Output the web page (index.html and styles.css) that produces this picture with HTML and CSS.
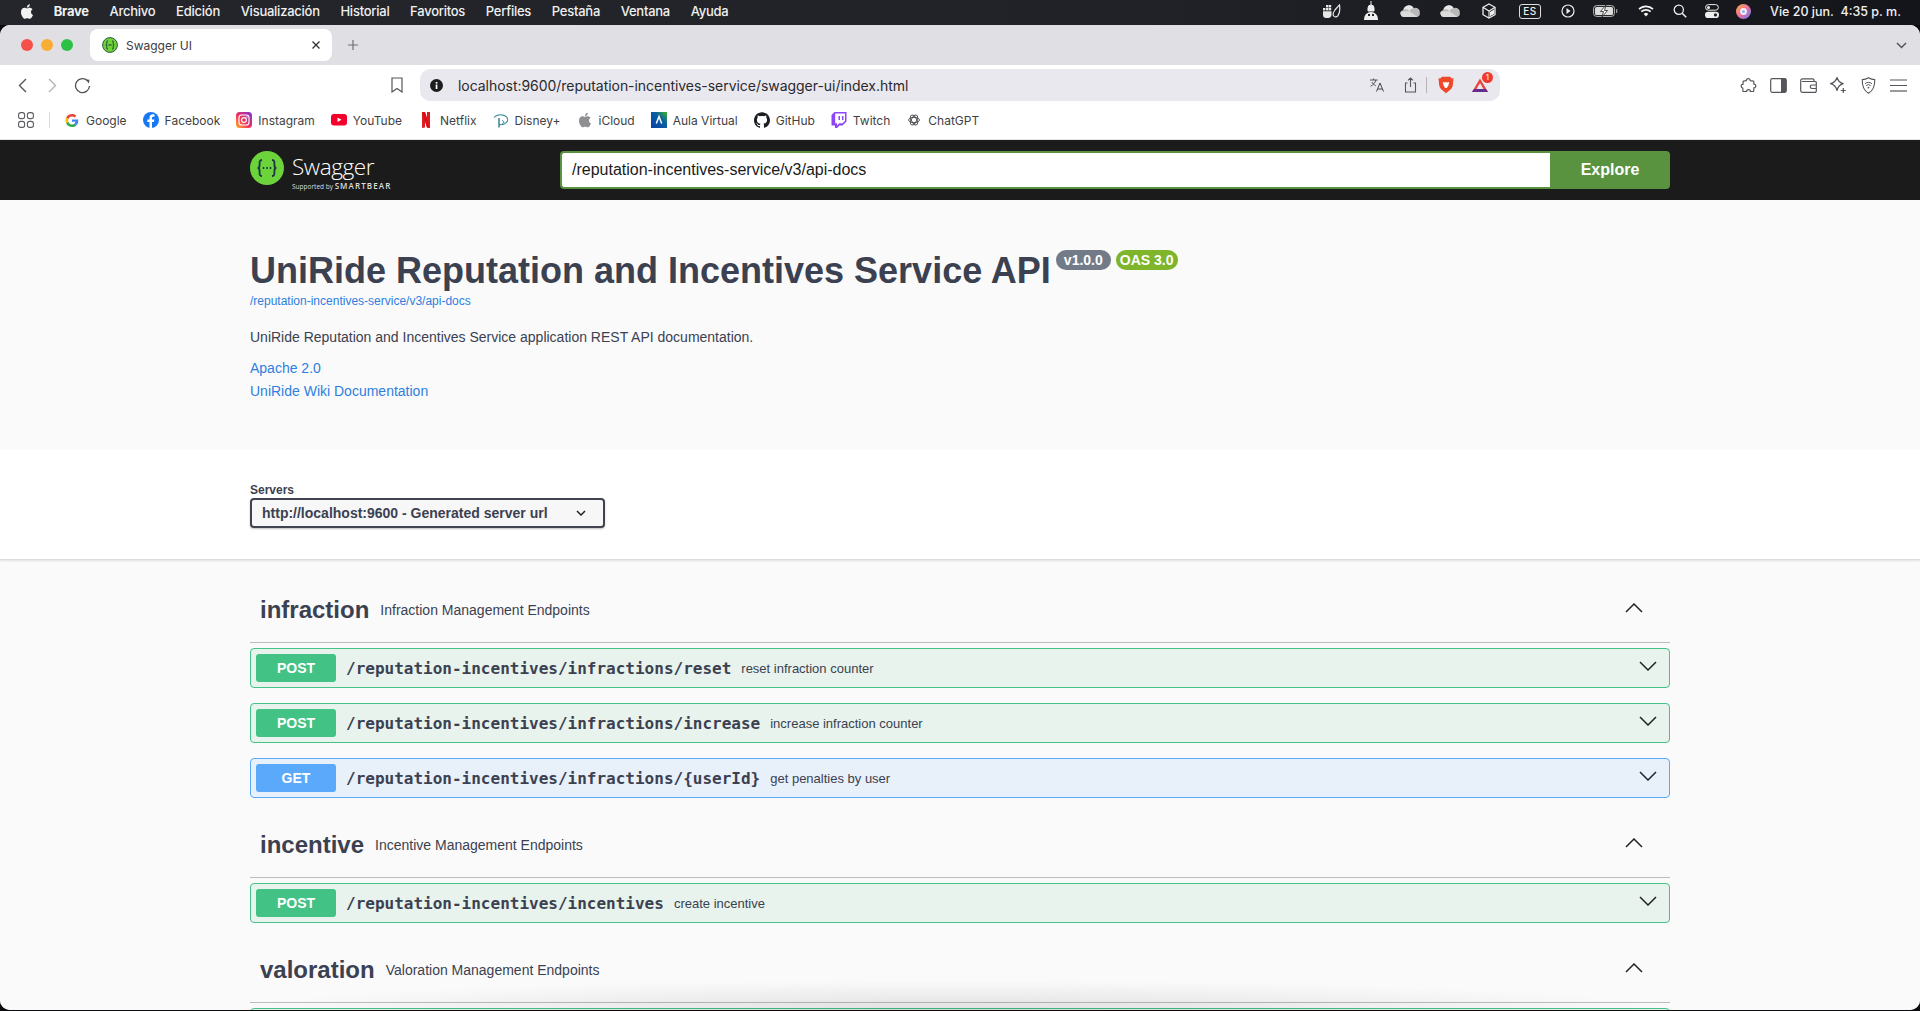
FILE: index.html
```html
<!DOCTYPE html>
<html lang="es">
<head>
  <meta charset="UTF-8" />
  <title>Swagger UI</title>
  <link rel="stylesheet" href="styles.css">
</head>
<body>

<svg class="defs" width="0" height="0">
  <symbol id="chev-down" viewBox="0 0 18 10"><polyline points="1,1 9,9 17,1" fill="none" stroke="#222" stroke-width="1.5"/></symbol>
  <symbol id="chev-up" viewBox="0 0 18 10"><polyline points="1,9 9,1 17,9" fill="none" stroke="#222" stroke-width="1.5"/></symbol>
  <symbol id="onedrive" viewBox="0 0 20 12">
    <path d="M4 12a3.6 3.6 0 0 1-.6-7.1A5.6 5.6 0 0 1 13.8 3.2 4.4 4.4 0 0 1 19.8 8 3.6 3.6 0 0 1 17 12z" fill="#b9b9b9"/>
    <path d="M3.4 4.9A5.6 5.6 0 0 1 13.8 3.2 5 5 0 0 0 9.5 6.2 4.4 4.4 0 0 0 3.4 4.9z" fill="#e6e6e6"/>
    <path d="M4 12a3.6 3.6 0 0 1-3-5.6L9.5 6.2l8 5.8z" fill="#dcdcdc"/>
  </symbol>
</svg>

<div class="menubar">
  <div class="menu-left">
    <svg class="apple" width="16" height="19" viewBox="0 0 24 24"><path fill="#f2f2f2" d="M16.365 1.43c0 1.14-.493 2.27-1.177 3.08-.744.9-1.99 1.57-2.987 1.57-.12 0-.23-.02-.3-.03-.01-.06-.04-.22-.04-.39 0-1.15.572-2.27 1.206-2.98.804-.94 2.142-1.64 3.248-1.68.03.13.05.28.05.43zm4.565 15.71c-.03.07-.463 1.58-1.518 3.12-.945 1.34-1.94 2.71-3.43 2.71-1.517 0-1.9-.88-3.63-.88-1.698 0-2.302.91-3.67.91-1.377 0-2.332-1.26-3.428-2.8-1.287-1.82-2.323-4.63-2.323-7.28 0-4.28 2.797-6.55 5.552-6.55 1.448 0 2.675.95 3.6.95.865 0 2.222-1.01 3.902-1.01.613 0 2.886.06 4.374 2.19-.13.09-2.383 1.37-2.383 4.19 0 3.26 2.854 4.42 2.955 4.45z"/></svg>
    <span class="menu-app">Brave</span>
    <span>Archivo</span>
    <span>Edición</span>
    <span>Visualización</span>
    <span>Historial</span>
    <span>Favoritos</span>
    <span>Perfiles</span>
    <span>Pestaña</span>
    <span>Ventana</span>
    <span>Ayuda</span>
  </div>
  <div class="menu-right">
    <div class="status-icons">
      <svg width="18" height="16" viewBox="0 0 18 16"><g fill="#e8e8e8"><rect x="3" y="2" width="2.4" height="2.4"/><rect x="5.8" y="2" width="2.4" height="2.4"/><rect x="3" y="5" width="2.4" height="2.4"/><rect x="0" y="5" width="2.4" height="2.4"/><rect x="5.8" y="5" width="2.4" height="2.4"/><path d="M0 8.2h8.5v3A3.6 3.6 0 0 1 5 15H3.2A3.4 3.4 0 0 1 0 11.5z"/></g><path d="M16.5 2c.6 4 .3 8-1.5 10.6-1 1.4-2.8 1.8-4 .8-1.2-1.2-1-3.4.3-5.4C12.5 6 14.5 4 16.5 2z" fill="none" stroke="#e8e8e8" stroke-width="1.2"/></svg>
      <svg width="16" height="20" viewBox="0 0 16 20"><path d="M8 0v4M8 4a3 3 0 0 1 3 3v3H5V7a3 3 0 0 1 3-3z" fill="#eee" stroke="#eee"/><path d="M1 18a7 7 0 0 1 14 0v1H1z" fill="#eee"/><rect x="5" y="13" width="2" height="2" fill="#222"/><rect x="9" y="13" width="2" height="2" fill="#222"/></svg>
      <svg width="20" height="12"><use href="#onedrive"/></svg>
      <svg width="20" height="12"><use href="#onedrive"/></svg>
      <svg width="14" height="16" viewBox="0 0 14 16"><path d="M7 1l6 3.3v7.4L7 15l-6-3.300V4.300z" fill="none" stroke="#eee" stroke-width="1.3"/><path d="M1 4.300L7 8l6-3.700M7 8v7" fill="none" stroke="#eee" stroke-width="1.1"/><path d="M8 9l4-2.500v4.500l-4 2.300z" fill="#eee"/></svg>
      <span class="es-key">ES</span>
      <svg width="14" height="14" viewBox="0 0 14 14"><circle cx="7" cy="7" r="6" fill="none" stroke="#eee" stroke-width="1.2"/><path d="M5.5 4l4 3-4 3z" fill="#eee"/></svg>
      <svg width="25" height="12" viewBox="0 0 25 12"><rect x=".6" y=".6" width="20.8" height="10.8" rx="3" fill="none" stroke="#bbb" stroke-width="1"/><rect x="2" y="2" width="18" height="8" rx="1.5" fill="#ddd"/><path d="M13 0L7.500 6.500h3L9 12l5.500-6.500h-3z" fill="#fff" stroke="#222" stroke-width=".8"/><rect x="23" y="4" width="1.3" height="4" rx=".6" fill="#999"/></svg>
      <svg width="16" height="12" viewBox="0 0 16 12"><path d="M1 4.200a10 10 0 0 1 14 0M3.300 6.700a6.800 6.800 0 0 1 9.400 0" fill="none" stroke="#f2f2f2" stroke-width="1.7"/><path d="M5.700 9a3.200 3.200 0 0 1 4.600 0L8 11.500z" fill="#f2f2f2"/></svg>
      <svg width="14" height="14" viewBox="0 0 14 14"><circle cx="5.8" cy="5.8" r="4.6" fill="none" stroke="#eee" stroke-width="1.3"/><path d="M9.200 9.200l4 4" stroke="#eee" stroke-width="1.6"/></svg>
      <svg width="14" height="14" viewBox="0 0 14 14"><rect x=".6" y=".6" width="12.8" height="5.6" rx="2.8" fill="none" stroke="#eee"/><circle cx="3.5" cy="3.4" r="1.5" fill="#eee"/><rect y="7.8" width="14" height="6.2" rx="3.1" fill="#eee"/><circle cx="10.5" cy="10.9" r="1.6" fill="#222"/></svg>
      <svg width="15" height="15" viewBox="0 0 15 15"><defs><linearGradient id="siri" x1="0" y1="0" x2="1" y2="1"><stop offset="0" stop-color="#f7b23b"/><stop offset=".5" stop-color="#ef6f9e"/><stop offset="1" stop-color="#5a7dff"/></linearGradient></defs><circle cx="7.5" cy="7.500" r="7.5" fill="url(#siri)"/><circle cx="7.5" cy="7.500" r="3.4" fill="#f4eef6"/><circle cx="7.500" cy="7.500" r="1.500" fill="#8fb4ff"/></svg>
    </div>
    <span class="clock">Vie 20 jun.&nbsp; 4:35 p. m.</span>
  </div>
</div>

<div class="window">
  <div class="tabstrip">
    <div class="lights">
      <i class="light red"></i>
      <i class="light amber"></i>
      <i class="light green"></i>
    </div>
    <div class="tab">
      <svg width="16" height="16" viewBox="0 0 16 16"><circle cx="8" cy="8" r="7.4" fill="#6fd13c" stroke="#2c5a3c" stroke-width="1"/><path d="M6 3.800c-1.500 0-1.200 1.400-1.200 2.600 0 1-.5 1.600-1 1.600.5 0 1 .6 1 1.600 0 1.200-.3 2.600 1.200 2.600M10 3.800c1.500 0 1.200 1.400 1.200 2.600 0 1 .5 1.600 1 1.600-.5 0-1 .6-1 1.600 0 1.200.3 2.600-1.200 2.600M6.300 8h3.400" fill="none" stroke="#173b2a" stroke-width="1"/></svg>
      <span class="tab-title">Swagger UI</span>
      <svg class="tab-close" width="8" height="8" viewBox="0 0 8 8"><path d="M.5.5l7 7M7.500.5l-7 7" stroke="#333" stroke-width="1.3"/></svg>
    </div>
    <svg class="new-tab" width="10" height="10" viewBox="0 0 10 10"><path d="M5 0v10M0 5h10" stroke="#6f6f74" stroke-width="1.2"/></svg>
    <svg class="tab-list" width="11" height="7" viewBox="0 0 11 7"><polyline points="1,1 5.5,5.5 10,1" fill="none" stroke="#55565c" stroke-width="1.5"/></svg>
  </div>

  <div class="toolbar">
    <div class="tool-btn"><svg width="9" height="15" viewBox="0 0 9 15"><polyline points="8,1 1.5,7.5 8,14" fill="none" stroke="#55565c" stroke-width="1.4"/></svg></div>
    <div class="tool-btn"><svg width="9" height="15" viewBox="0 0 9 15"><polyline points="1,1 7.5,7.5 1,14" fill="none" stroke="#b4b4b8" stroke-width="1.4"/></svg></div>
    <div class="tool-btn"><svg width="17" height="17" viewBox="0 0 17 17"><path d="M13.6 3.800A7 7 0 1 0 15.500 9" fill="none" stroke="#55565c" stroke-width="1.3"/><path d="M11.5 2.500l4 .2-.6 3.800z" fill="#55565c"/></svg></div>
    <div class="tool-btn bookmark"><svg width="12" height="16" viewBox="0 0 12 16"><path d="M1 1h10v14L6 11.500 1 15z" fill="none" stroke="#55565c" stroke-width="1.2"/></svg></div>
    <div class="omnibox">
      <svg width="13" height="13" viewBox="0 0 13 13"><circle cx="6.5" cy="6.5" r="6.5" fill="#1d1d20"/><rect x="5.7" y="5.5" width="1.7" height="4.5" fill="#fff"/><rect x="5.7" y="3" width="1.7" height="1.6" fill="#fff"/></svg>
      <span class="url">localhost:9600/reputation-incentives-service/swagger-ui/index.html</span>
      <svg class="omni-translate" width="14" height="14" viewBox="0 0 14 14"><path d="M0 2h7.500M3.700 .5V2M6 2C5 5 3 7 .5 8.300M1.800 4c1 1.800 2.400 3 4 3.800" fill="none" stroke="#444" stroke-width=".9"/><path d="M6.500 13.500L10 5l3.500 8.500M7.800 11h4.400" fill="none" stroke="#444" stroke-width="1"/></svg>
      <svg class="omni-share" width="13" height="16" viewBox="0 0 13 16"><path d="M3.500 6H1.500v9h10V6H9.500M6.500 10V1M4 3.300L6.500 .9 9 3.300" fill="none" stroke="#55565c" stroke-width="1.1"/></svg>
      <i class="omni-sep"></i>
      <svg class="omni-brave" width="16" height="18" viewBox="0 0 16 18"><path d="M4 .8h8l1.800 1.800 1.700-.4-.6 6.300c-.4 3.200-1.500 4.500-3.300 5.800L8 17.200l-3.600-2.900c-1.800-1.300-2.900-2.600-3.300-5.800L.5 2.200l1.700.4z" fill="#f0492a"/><path d="M4.800 6l2 .6L8 6l1.200.6 2-.6-.8 3.500L8.800 12H7.200L5.600 9.500z" fill="#fff"/></svg>
      <div class="omni-rewards">
        <svg width="16" height="14" viewBox="0 0 16 14"><path d="M8 .5L16 14H0z" fill="#e8453c"/><path d="M0 14h16l-2-3H2z" fill="#662d91"/><path d="M8 5l3.500 6h-7z" fill="#e9e8ee"/></svg>
        <span class="count-badge">1</span>
      </div>
    </div>
    <div class="tool-right">
      <div class="tool-btn"><svg width="17" height="17" viewBox="0 0 17 17"><path d="M6.500 3.500C6 1 10.500 1 10 3.500c0 .5 3.500.3 3.700.7.300 1 0 2.800.2 3 2.500-.6 2.500 4 0 3.500-.2 0 0 3.300-.3 3.700-.9.300-3 0-3.300 0 .5-2.500-4-2.500-3.600 0-.3 0-3 .3-3.700 0-.3-.5 0-2.900-.2-3.200C.6 10.700.6 7 3 7.500c.2 0 0-2.700.1-3.200.4-.4 3.400-.3 3.400-.8z" fill="none" stroke="#55565c" stroke-width="1.2"/></svg></div>
      <div class="tool-btn"><svg width="17" height="15" viewBox="0 0 17 15"><rect x=".7" y=".7" width="15.600" height="13.600" rx="1.5" fill="none" stroke="#55565c" stroke-width="1.2"/><rect x="11" y="1" width="5" height="13" fill="#55565c"/></svg></div>
      <div class="tool-btn"><svg width="17" height="15" viewBox="0 0 17 15"><path d="M14 3.500V2a1.200 1.200 0 0 0-1.200-1.200H2.500A1.800 1.800 0 0 0 .7 2.600v10A1.700 1.700 0 0 0 2.400 14.300h12.500a1.300 1.300 0 0 0 1.400-1.300V4.700a1.200 1.200 0 0 0-1.300-1.200H2" fill="none" stroke="#55565c" stroke-width="1.2"/><path d="M16 7h-4a1.500 1.500 0 0 0 0 3.500h4" fill="none" stroke="#55565c" stroke-width="1.2"/></svg></div>
      <div class="tool-btn"><svg width="18" height="18" viewBox="0 0 18 18"><path d="M8 1.500c1 3.500 2.700 5.200 6.200 6.200-3.500 1-5.200 2.700-6.200 6.800C7 10.400 5.300 8.700 1.500 7.700 5.300 6.700 7 5 8 1.500z" fill="none" stroke="#55565c" stroke-width="1.2" stroke-linejoin="round"/><path d="M14.300 12v5M11.800 14.500h5" stroke="#55565c" stroke-width="1.2"/></svg></div>
      <div class="tool-btn"><svg width="15" height="17" viewBox="0 0 15 17"><path d="M7.500 .8c2 1.200 4 1.800 6.200 1.800.3 6-1 10.500-6.200 13.600C2.300 13.100 1 8.600 1.300 2.600 3.500 2.600 5.500 2 7.500 .8z" fill="none" stroke="#55565c" stroke-width="1.1"/><path d="M4 6.800a5 5 0 0 1 7 0M5.300 8.700a3 3 0 0 1 4.400 0" fill="none" stroke="#55565c" stroke-width="1"/><circle cx="7.5" cy="10.6" r=".9" fill="#55565c"/></svg></div>
      <div class="tool-btn"><svg width="17" height="13" viewBox="0 0 17 13"><path d="M0 1h17M0 6.500h17" stroke="#55565c" stroke-width="1.1"/><path d="M0 12h17" stroke="#77787d" stroke-width="1.6"/></svg></div>
    </div>
  </div>

  <div class="bookmarks">
    <svg class="apps" width="16" height="16" viewBox="0 0 16 16"><g fill="none" stroke="#5e5f64" stroke-width="1.1"><rect x=".6" y=".6" width="6" height="6" rx="2.2"/><rect x="9.4" y=".6" width="6" height="6" rx="2.2"/><rect x=".6" y="9.4" width="6" height="6" rx="2.2"/><rect x="9.4" y="9.4" width="6" height="6" rx="2.2"/></g></svg>
    <i class="bm-sep"></i>
    <a class="bm"><svg width="13" height="13" viewBox="0 0 48 48"><path fill="#EA4335" d="M24 9.500c3.540 0 6.710 1.220 9.210 3.600l6.850-6.850C35.900 2.380 30.470 0 24 0 14.620 0 6.510 5.380 2.560 13.220l7.980 6.190C12.430 13.720 17.740 9.500 24 9.500z"/><path fill="#4285F4" d="M46.980 24.550c0-1.570-.15-3.090-.38-4.550H24v9.020h12.940c-.58 2.960-2.260 5.480-4.780 7.180l7.730 6c4.510-4.180 7.090-10.360 7.090-17.650z"/><path fill="#FBBC05" d="M10.530 28.590c-.48-1.450-.76-2.990-.76-4.590s.27-3.140.76-4.590l-7.980-6.190C.92 16.460 0 20.120 0 24c0 3.880.92 7.540 2.560 10.780l7.970-6.190z"/><path fill="#34A853" d="M24 48c6.480 0 11.930-2.130 15.890-5.810l-7.730-6c-2.150 1.450-4.920 2.300-8.160 2.300-6.260 0-11.570-4.220-13.470-9.910l-7.980 6.190C6.510 42.620 14.620 48 24 48z"/></svg>Google</a>
    <a class="bm"><svg width="16" height="16" viewBox="0 0 16 16"><circle cx="8" cy="8" r="8" fill="#1877f2"/><path d="M9 16v-6h2l.4-2.500H9V6c0-.8.3-1.300 1.300-1.300h1.200V2.500C11.200 2.400 10.500 2.300 9.800 2.300 7.800 2.300 6.500 3.500 6.500 5.700v1.800H4.300V10h2.200v6z" fill="#fff"/></svg>Facebook</a>
    <a class="bm"><svg width="16" height="16" viewBox="0 0 16 16"><defs><linearGradient id="insta" x1="0" y1="1" x2="1" y2="0"><stop offset="0" stop-color="#fdb62c"/><stop offset=".45" stop-color="#f0305f"/><stop offset="1" stop-color="#7a35d6"/></linearGradient></defs><rect width="16" height="16" rx="3.5" fill="url(#insta)"/><rect x="3" y="3" width="10" height="10" rx="2.8" fill="none" stroke="#fff" stroke-width="1.1"/><circle cx="8" cy="8" r="2.4" fill="none" stroke="#fff" stroke-width="1.1"/><circle cx="11" cy="5" r=".7" fill="#fff"/></svg>Instagram</a>
    <a class="bm"><svg width="16" height="12" viewBox="0 0 16 12"><rect width="16" height="11.5" rx="3" fill="#f5002c"/><path d="M6.500 3.500l4 2.300-4 2.300z" fill="#fff"/></svg>YouTube</a>
    <a class="bm"><svg width="16" height="16" viewBox="0 0 16 16"><path d="M4 0h3l2 6V0h3v16l-3-.4L7 9.500V15.600L4 16z" fill="#d81f26"/><path d="M4 0h3l5 16-3-.4z" fill="#e50914"/></svg>Netflix</a>
    <a class="bm"><svg width="16" height="15" viewBox="0 0 16 15"><path d="M1 4.500C4 1 11 .5 14 4.500c1.700 2.300.7 5-3 6.500-1.600.7-3.500.8-5 .5" fill="none" stroke="#3a8a9e" stroke-width="1.1"/><path d="M6 5v9.500" stroke="#1f6f86" stroke-width="1.3"/><path d="M9 7.500c2 .4 2.500 2 .3 3.300" fill="none" stroke="#1f6f86" stroke-width="1"/></svg>Disney+</a>
    <a class="bm"><svg width="14" height="16" viewBox="0 0 24 24"><path fill="#8f8f93" d="M16.365 1.43c0 1.14-.493 2.27-1.177 3.08-.744.9-1.99 1.57-2.987 1.57-.12 0-.23-.02-.3-.03-.01-.06-.04-.22-.04-.39 0-1.15.572-2.27 1.206-2.98.804-.94 2.142-1.64 3.248-1.68.03.13.05.28.05.43zm4.565 15.71c-.03.07-.463 1.58-1.518 3.12-.945 1.34-1.94 2.71-3.43 2.71-1.517 0-1.9-.88-3.63-.88-1.698 0-2.302.91-3.67.91-1.377 0-2.332-1.26-3.428-2.8-1.287-1.82-2.323-4.63-2.323-7.28 0-4.28 2.797-6.55 5.552-6.55 1.448 0 2.675.95 3.6.95.865 0 2.222-1.01 3.902-1.01.613 0 2.886.06 4.374 2.19-.13.09-2.383 1.37-2.383 4.19 0 3.26 2.854 4.42 2.955 4.45z"/></svg>iCloud</a>
    <a class="bm"><svg width="16" height="16" viewBox="0 0 16 16"><defs><linearGradient id="aula" x1="0" y1="1" x2="1" y2="0"><stop offset="0" stop-color="#0b3fa8"/><stop offset=".6" stop-color="#0a5fa0"/><stop offset="1" stop-color="#3db52a"/></linearGradient></defs><rect width="16" height="16" fill="url(#aula)"/><path d="M5.300 11.500L8 4.500l2.700 7" fill="none" stroke="#fff" stroke-width="1.5"/></svg>Aula Virtual</a>
    <a class="bm"><svg width="16" height="16" viewBox="0 0 24 24"><path fill="#1b1f23" d="M12 .297c-6.63 0-12 5.373-12 12 0 5.303 3.438 9.8 8.205 11.385.6.113.82-.258.82-.577 0-.285-.01-1.04-.015-2.04-3.338.724-4.042-1.61-4.042-1.61C4.422 18.07 3.633 17.7 3.633 17.7c-1.087-.744.084-.729.084-.729 1.205.084 1.838 1.236 1.838 1.236 1.07 1.835 2.809 1.305 3.495.998.108-.776.417-1.305.76-1.605-2.665-.3-5.466-1.332-5.466-5.93 0-1.31.465-2.38 1.235-3.22-.135-.303-.54-1.523.105-3.176 0 0 1.005-.322 3.3 1.23.96-.267 1.98-.399 3-.405 1.02.006 2.04.138 3 .405 2.28-1.552 3.285-1.23 3.285-1.23.645 1.653.24 2.873.12 3.176.765.84 1.23 1.91 1.23 3.22 0 4.61-2.805 5.625-5.475 5.92.42.36.81 1.096.81 2.22 0 1.606-.015 2.896-.015 3.286 0 .315.21.69.825.57C20.565 22.092 24 17.592 24 12.297c0-6.627-5.373-12-12-12"/></svg>GitHub</a>
    <a class="bm"><svg width="15" height="16" viewBox="0 0 15 16"><path d="M3 0h12v9.500L11 13.500H8l-2.500 2.500H3.500v-2.500H0V3z" fill="#8c45f7"/><path d="M3.700 1.500H13.500v7.300L11 11.300H7.800L5.500 13.500v-2.200H3.700z" fill="#fff"/><rect x="7" y="4" width="1.5" height="4" fill="#8c45f7"/><rect x="10.5" y="4" width="1.5" height="4" fill="#8c45f7"/></svg>Twitch</a>
    <a class="bm"><svg width="12" height="12" viewBox="0 0 12 12"><g fill="none" stroke="#55565c" stroke-width="1"><ellipse cx="6" cy="6" rx="5.4" ry="2.6"/><ellipse cx="6" cy="6" rx="5.4" ry="2.6" transform="rotate(60 6 6)"/><ellipse cx="6" cy="6" rx="5.4" ry="2.6" transform="rotate(120 6 6)"/></g></svg>ChatGPT</a>
  </div>

  <div class="page">
    <div class="topbar">
      <div class="wrap topbar-inner">
        <div class="logo">
          <svg width="34" height="34" viewBox="0 0 34 34"><circle cx="17" cy="17" r="17" fill="#6cd43a"/><path d="M12 9c-3 0-2.400 2.800-2.400 5 0 1.800-.8 3-2 3 1.200 0 2 1.200 2 3 0 2.200-.6 5 2.400 5M22 9c3 0 2.400 2.800 2.400 5 0 1.800.8 3 2 3-1.200 0-2 1.200-2 3 0 2.200.6 5-2.400 5" fill="none" stroke="#173647" stroke-width="1.8"/><g fill="#173647"><circle cx="13.5" cy="17" r="1"/><circle cx="17" cy="17" r="1"/><circle cx="20.5" cy="17" r="1"/></g></svg>
          <div class="logo-text">
            <span class="logo-name">Swagger</span>
            <span class="logo-sub">Supported by <b>SMARTBEAR</b></span>
          </div>
        </div>
        <div class="search">
          <input class="search-input" type="text" value="/reputation-incentives-service/v3/api-docs">
          <button class="search-btn">Explore</button>
        </div>
      </div>
    </div>

    <div class="info">
      <div class="wrap">
        <div class="title-row">
          <h1>UniRide Reputation and Incentives Service API</h1>
          <span class="pill pill-version">v1.0.0</span>
          <span class="pill pill-oas">OAS 3.0</span>
        </div>
        <a class="docs-link">/reputation-incentives-service/v3/api-docs</a>
        <p class="desc">UniRide Reputation and Incentives Service application REST API documentation.</p>
        <a class="info-link">Apache 2.0</a>
        <a class="info-link">UniRide Wiki Documentation</a>
      </div>
    </div>

    <div class="servers">
      <div class="wrap">
        <div class="servers-label">Servers</div>
        <div class="server-select">
          <span>http://localhost:9600 - Generated server url</span>
          <svg width="10" height="6" viewBox="0 0 10 6"><polyline points="1,1 5,5 9,1" fill="none" stroke="#222" stroke-width="1.5"/></svg>
        </div>
      </div>
    </div>

    <div class="wrap ops">
      <div class="tag">
        <span class="tag-name">infraction</span>
        <span class="tag-desc">Infraction Management Endpoints</span>
        <svg class="tag-chev" width="18" height="10"><use href="#chev-up"/></svg>
      </div>
      <div class="op op-post">
        <span class="method">POST</span>
        <span class="op-path">/reputation-incentives/infractions/reset</span>
        <span class="op-desc">reset infraction counter</span>
        <svg class="op-chev" width="18" height="10"><use href="#chev-down"/></svg>
      </div>
      <div class="op op-post">
        <span class="method">POST</span>
        <span class="op-path">/reputation-incentives/infractions/increase</span>
        <span class="op-desc">increase infraction counter</span>
        <svg class="op-chev" width="18" height="10"><use href="#chev-down"/></svg>
      </div>
      <div class="op op-get">
        <span class="method">GET</span>
        <span class="op-path">/reputation-incentives/infractions/{userId}</span>
        <span class="op-desc">get penalties by user</span>
        <svg class="op-chev" width="18" height="10"><use href="#chev-down"/></svg>
      </div>

      <div class="tag">
        <span class="tag-name">incentive</span>
        <span class="tag-desc">Incentive Management Endpoints</span>
        <svg class="tag-chev" width="18" height="10"><use href="#chev-up"/></svg>
      </div>
      <div class="op op-post">
        <span class="method">POST</span>
        <span class="op-path">/reputation-incentives/incentives</span>
        <span class="op-desc">create incentive</span>
        <svg class="op-chev" width="18" height="10"><use href="#chev-down"/></svg>
      </div>

      <div class="tag">
        <span class="tag-name">valoration</span>
        <span class="tag-desc">Valoration Management Endpoints</span>
        <svg class="tag-chev" width="18" height="10"><use href="#chev-up"/></svg>
      </div>
      <div class="op op-post"></div>
    </div>
    <div class="bottom-shade"></div>
  </div>
</div>

</body>
</html>
```

FILE: styles.css
```css
* {
  box-sizing: border-box;
}
html, body {
  height: 100%;
}
body {
  margin: 0;
  height: 1011px;
  overflow: hidden;
  background: #0b0b0d;
  font-family: Inter, "Liberation Sans", sans-serif;
  color: #3b4151;
}
.defs {
  position: absolute;
}

/* macOS menu bar */
.menubar {
  height: 25px;
  padding-bottom: 3px;
  display: flex;
  justify-content: space-between;
  align-items: center;
  background: linear-gradient(to right, #24262c, #202227 60%, #13151a);
  color: #f0f0f0;
  font-size: 13px;
  font-weight: 500;
}
.menu-left {
  display: flex;
  align-items: center;
  gap: 20.7px;
}
.menu-left span {
  letter-spacing: -0.25px;
}
.apple {
  margin-left: 19px;
  margin-right: -2px;
}
.menu-left .menu-app {
  font-weight: 700;
}
.menu-right {
  display: flex;
  align-items: center;
  padding-right: 19px;
}
.status-icons {
  display: grid;
  grid-template-columns: 40px 38px 40px 40px 38px 44px 32px 42px 40px 28px 36px 26px;
  justify-items: center;
  align-items: center;
}
.es-key {
  width: 22px;
  height: 15px;
  border: 1px solid #ddd;
  border-radius: 3px;
  font-size: 10px;
  line-height: 13px;
  text-align: center;
  letter-spacing: .5px;
}
.clock {
  margin-left: 14px;
  font-size: 12.5px;
  white-space: nowrap;
}

/* browser window */
.window {
  height: 985px;
  border-radius: 10px;
  overflow: hidden;
  display: flex;
  flex-direction: column;
  background: #fff;
}
.tabstrip {
  height: 40px;
  flex: none;
  display: flex;
  align-items: center;
  background: #e0dfe4;
}
.lights {
  width: 90px;
  padding-left: 21px;
  display: flex;
  gap: 8px;
}
.light {
  width: 12px;
  height: 12px;
  border-radius: 50%;
}
.red { background: #f6504a; }
.amber { background: #f8ae35; }
.green { background: #2cc144; }
.tab {
  width: 242px;
  height: 32px;
  padding: 0 30px 0 12px;
  border-radius: 8px;
  background: #fff;
  display: flex;
  align-items: center;
  font-size: 12px;
  color: #3a3a3e;
}
.tab-title {
  margin-left: 8px;
  flex: 1;
}
.tab-close {
  margin-right: -18px;
}
.new-tab {
  margin-left: 16px;
}
.tab-list {
  margin-left: auto;
  margin-right: 13px;
}
.toolbar {
  height: 41px;
  flex: none;
  padding: 0 7px 1px;
  display: flex;
  align-items: center;
}
.tool-btn {
  width: 30px;
  height: 30px;
  flex: none;
  display: flex;
  align-items: center;
  justify-content: center;
}
.bookmark {
  margin-left: 285px;
  margin-right: 8px;
}
.omnibox {
  width: 1080px;
  height: 32px;
  flex: none;
  padding: 0 12px 0 10px;
  border-radius: 10px;
  background: #e9e8ee;
  display: flex;
  align-items: center;
  font-size: 14px;
  color: #2a2a2e;
}
.url {
  margin-left: 15px;
  flex: 1;
  letter-spacing: -0.04px;
}
.omni-translate {
  margin-right: 20px;
}
.omni-share {
  margin-right: 9px;
}
.omni-sep {
  width: 1px;
  height: 16px;
  background: #b4b4b8;
  margin-right: 11px;
}
.omni-brave {
  margin-right: 18px;
}
.omni-rewards {
  position: relative;
  display: flex;
}
.count-badge {
  position: absolute;
  top: -6px;
  right: -5px;
  width: 11px;
  height: 11px;
  border-radius: 50%;
  background: #f0392f;
  color: #fff;
  font-size: 8px;
  line-height: 11px;
  text-align: center;
}
.tool-right {
  margin-left: auto;
  display: flex;
}
.bookmarks {
  height: 34px;
  flex: none;
  padding: 0 0 5px 18px;
  border-bottom: 1px solid #e3e3e6;
  display: flex;
  align-items: center;
  gap: 16px;
  font-size: 12px;
  color: #3f3f44;
}
.apps {
  flex: none;
}
.bm-sep {
  width: 1px;
  height: 16px;
  background: #dcdce0;
  margin-left: -1px;
  margin-right: -2px;
}
.bm {
  display: flex;
  align-items: center;
  gap: 6px;
  white-space: nowrap;
}
.bm svg {
  width: 16px;
  flex: none;
}

/* swagger page */
.page {
  position: relative;
  flex: 1;
  overflow: hidden;
  background: #fafafa;
  font-family: "Liberation Sans", Arial, sans-serif;
}
.wrap {
  width: 1420px;
  margin: 0 auto;
}
.topbar {
  height: 60px;
  background: #1b1b1b;
}
.topbar-inner {
  height: 100%;
  display: flex;
  align-items: center;
}
.logo {
  width: 310px;
  height: 60px;
  flex: none;
  padding-top: 11px;
  display: flex;
  align-items: flex-start;
  gap: 8px;
  color: #fff;
}
.logo-text {
  display: flex;
  flex-direction: column;
  padding-top: 2px;
}
.logo-name {
  font-family: "Open Sans", sans-serif;
  font-size: 22.5px;
  font-weight: 300;
  line-height: 28px;
  letter-spacing: -0.4px;
}
.logo-sub {
  font-family: "Open Sans", sans-serif;
  font-size: 6.5px;
  line-height: 10px;
  color: #ddd;
  white-space: nowrap;
}
.logo-sub b {
  font-size: 8px;
  letter-spacing: 1.1px;
  font-weight: 600;
}
.search {
  flex: 1;
  height: 38px;
  display: flex;
}
.search-input {
  flex: 1;
  min-width: 0;
  height: 100%;
  padding: 0 10px;
  border: 2px solid #5a933f;
  border-right: 0;
  border-radius: 4px 0 0 4px;
  background: #fff;
  font-family: "Liberation Sans", Arial, sans-serif;
  font-size: 16px;
  color: #1b1b1b;
  outline: none;
}
.search-btn {
  width: 120px;
  height: 100%;
  border: 0;
  border-radius: 0 4px 4px 0;
  background: #5a933f;
  color: #fff;
  font-family: "Liberation Sans", Arial, sans-serif;
  font-size: 16px;
  font-weight: 700;
}
.info {
  height: 250px;
  padding-top: 49px;
}
.title-row {
  display: flex;
  align-items: flex-start;
  height: 44px;
}
h1 {
  margin: 0 5px 0 0;
  font-size: 36px;
  line-height: 44px;
  font-weight: 700;
  white-space: nowrap;
}
.pill {
  height: 20px;
  margin-top: 1px;
  margin-right: 5px;
  padding: 0 8px;
  border-radius: 10px;
  color: #fff;
  font-size: 14px;
  font-weight: 700;
  line-height: 20px;
}
.pill-version { background: #737a88; }
.pill-oas {
  background: #7fb52a;
  padding: 0 4px;
}
.docs-link {
  display: block;
  font-size: 12px;
  line-height: 16px;
  color: #2f7fe0;
}
.desc {
  margin: 18px 0 0;
  font-size: 14px;
  line-height: 20px;
}
.info-link {
  display: block;
  margin-top: 3px;
  font-size: 14px;
  line-height: 20px;
  color: #2f7fe0;
}
.desc + .info-link {
  margin-top: 11px;
}
.servers {
  height: 110px;
  padding-top: 32px;
  background: #fff;
  border-bottom: 1px solid #dcdcdc;
  box-shadow: 0 1px 2px rgba(0, 0, 0, .1);
}
.servers-label {
  font-size: 12px;
  font-weight: 700;
  line-height: 16px;
}
.server-select {
  width: 355px;
  height: 30px;
  padding: 0 17px 0 10px;
  border: 2px solid #41444e;
  border-radius: 4px;
  background: #f7f7f7;
  box-shadow: 0 1px 2px rgba(0, 0, 0, .25);
  display: flex;
  align-items: center;
  justify-content: space-between;
  font-size: 14px;
  font-weight: 700;
}
.ops {
  padding-top: 18px;
}
.tag {
  height: 65px;
  margin-bottom: 5px;
  padding-left: 10px;
  border-bottom: 1px solid #bdbdbd;
  display: flex;
  align-items: center;
}
.tag-name {
  font-size: 24px;
  font-weight: 700;
}
.tag-desc {
  margin-left: 11px;
  font-size: 14px;
}
.tag-chev {
  margin-left: auto;
  margin-right: 27px;
  margin-bottom: 4px;
}
.op {
  height: 40px;
  margin-bottom: 15px;
  padding: 0 12px 0 5px;
  border: 1px solid;
  border-radius: 4px;
  display: flex;
  align-items: center;
}
.op-post {
  border-color: #45c288;
  background: #e7f3ec;
}
.op-get {
  border-color: #5aa9fb;
  background: #e8f0fa;
}
.method {
  width: 80px;
  height: 28px;
  flex: none;
  border-radius: 3px;
  color: #fff;
  font-size: 14px;
  font-weight: 700;
  line-height: 28px;
  text-align: center;
}
.op-post .method { background: #43c285; }
.op-get .method { background: #5aa9fb; }
.op-path {
  margin-left: 10px;
  font-family: "DejaVu Sans Mono", monospace;
  font-size: 16px;
  font-weight: 700;
  white-space: nowrap;
}
.op-desc {
  margin-left: 10px;
  font-size: 13px;
}
.op-chev {
  margin-left: auto;
  margin-bottom: 4px;
}
/* soft shadow at the window's lower edge */
.bottom-shade {
  position: absolute;
  left: 220px;
  right: 230px;
  bottom: 0;
  height: 30px;
  background: radial-gradient(ellipse at 50% 100%, rgba(0, 0, 0, .1), rgba(0, 0, 0, 0) 70%);
  pointer-events: none;
}
```
